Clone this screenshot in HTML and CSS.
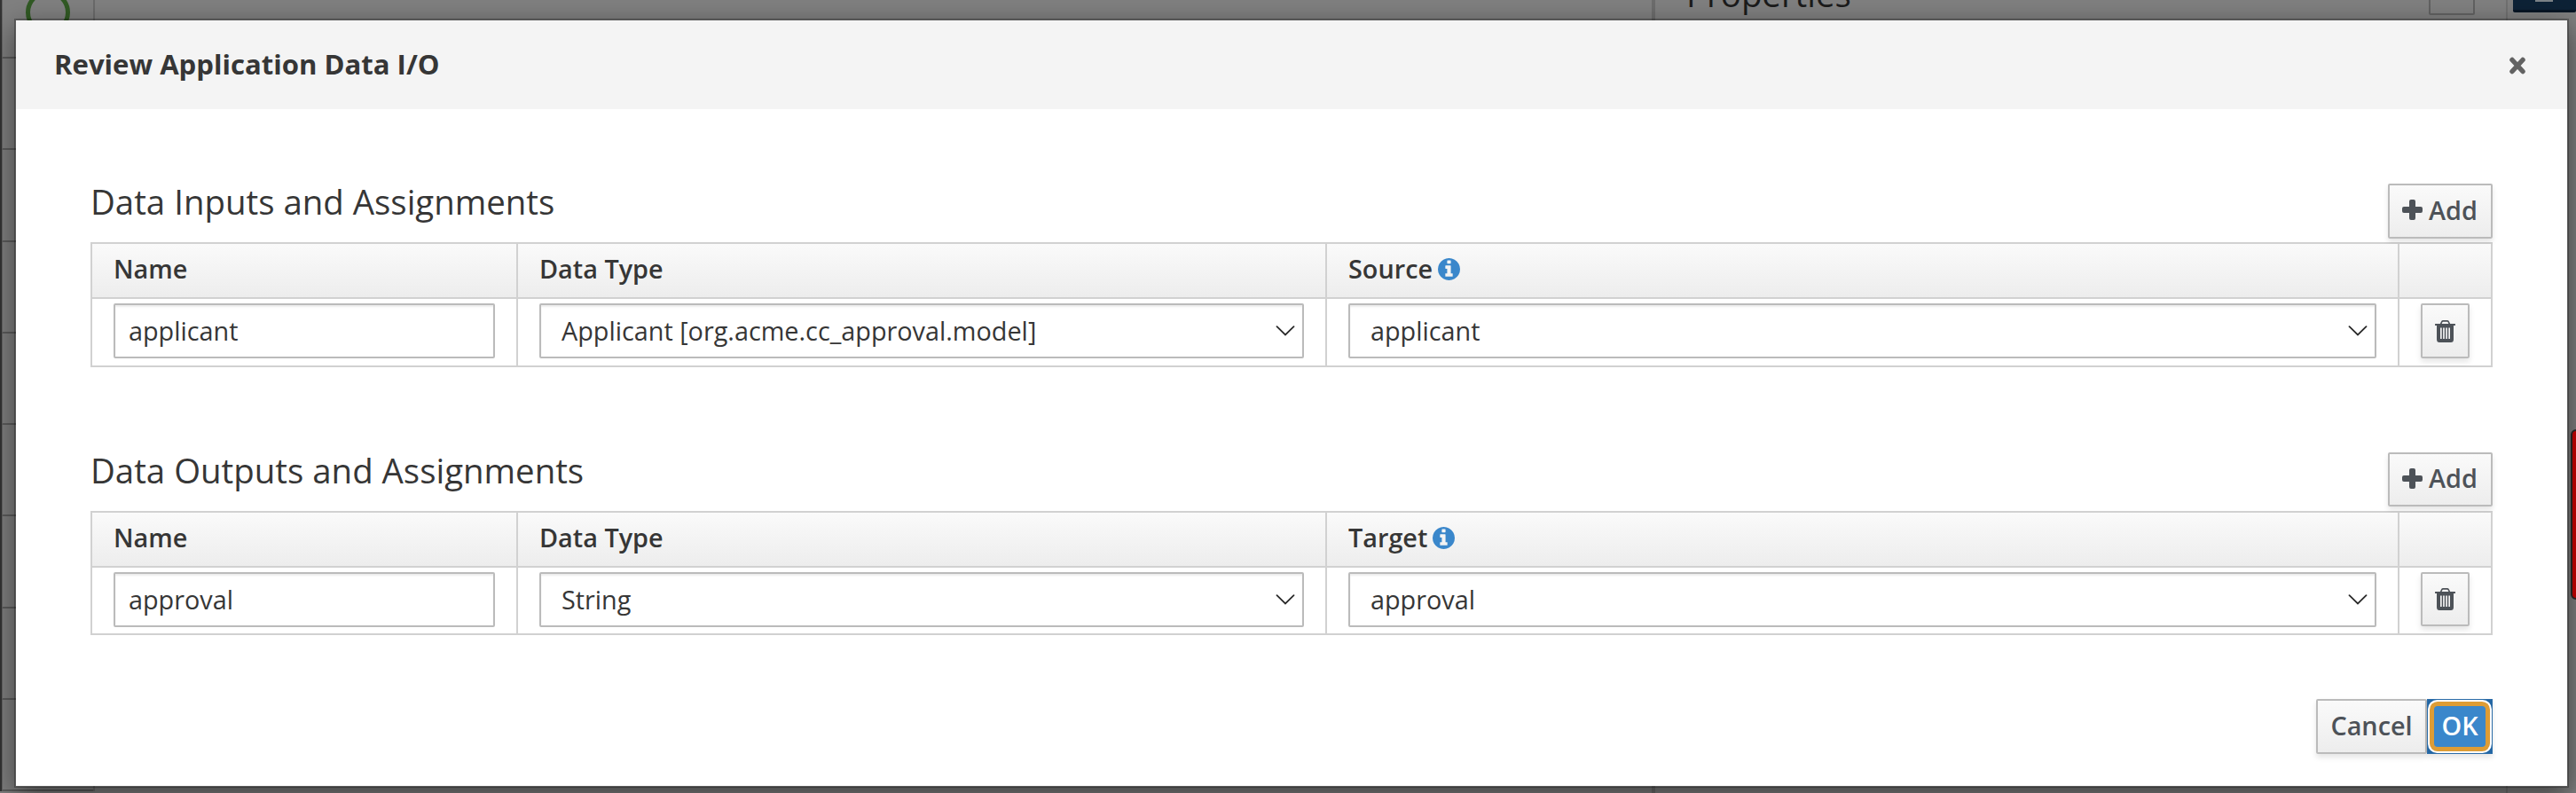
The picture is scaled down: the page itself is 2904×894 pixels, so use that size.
FILE: index.html
```html
<!DOCTYPE html>
<html lang="en">
<head>
<meta charset="utf-8">
<title>Review Application Data I/O</title>
<link rel="stylesheet" href="styles.css">
</head>
<body>
<svg class="defs" width="0" height="0" aria-hidden="true">
  <symbol id="info" viewBox="128 128 1536 1536"><path d="M1152 1376v-160q0-14-9-23t-23-9h-96V672q0-14-9-23t-23-9H672q-14 0-23 9t-9 23v160q0 14 9 23t23 9h96v320h-96q-14 0-23 9t-9 23v160q0 14 9 23t23 9h448q14 0 23-9t9-23zm-128-896V320q0-14-9-23t-23-9H800q-14 0-23 9t-9 23v160q0 14 9 23t23 9h192q14 0 23-9t9-23zm640 416q0 209-103 385.5T1281.5 1561 896 1664t-385.5-103T231 1281.5 128 896t103-385.5T510.5 231 896 128t385.5 103T1561 510.5 1664 896z"/></symbol>
  <symbol id="plus" viewBox="0 0 23 23"><path d="M10 0h3q2 0 2 2v6h6q2 0 2 2v3q0 2-2 2h-6v6q0 2-2 2h-3q-2 0-2-2v-6H2q-2 0-2-2v-3q0-2 2-2h6V2q0-2 2-2z"/></symbol>
  <symbol id="trash" viewBox="0 0 23 25"><path fill-rule="evenodd" d="M0.6 4h5.2L7 1.400Q7.700 0 9.200 0h4.600q1.500 0 2.200 1.400L17.200 4h5.200q.6 0 .6.600v.8q0 .6-.6.600H21v15.500Q21 25 18 25H5q-3 0-3-3.500V6H.6Q0 6 0 5.400v-.8Q0 4 .6 4zM7.600 4h7.800l-.8-1.800q-.2-.5-.7-.5H9.100q-.5 0-.7.500zM6 8.500V21h1.700V8.500zm3.100 0V21h1.700V8.500zm3.100 0V21h1.700V8.500zm3.100 0V21h1.700V8.500z"/></symbol>
  <symbol id="chevron" viewBox="0 0 22 12"><path d="M1.500 1.200 11 10.500l9.500-9.300" fill="none" stroke="#2a2a2a" stroke-width="1.800" stroke-linecap="round"/></symbol>
</svg>

<div class="workbench">
  <div class="palette">
    <span class="cell first"><i class="ring"></i></span><span class="cell"></span><span class="cell"></span><span class="cell"></span><span class="cell"></span><span class="cell"></span><span class="cell"></span><span class="cell"></span><span class="cell"></span>
  </div>
  <div class="canvas"></div>
  <div class="properties"><span class="properties-title">Properties</span><span class="collapse"></span></div>
  <div class="rail"><span class="rail-button"><i class="rail-glyph"></i></span></div>
</div>
<div class="error-bar"></div>

<div class="modal" role="dialog">
  <header class="modal-header">
    <h4 class="modal-title">Review Application Data I/O</h4>
    <svg class="close" viewBox="0 0 20 20"><path d="M4 3.500 16 16.500M16 3.500 4 16.500" stroke="#626262" stroke-width="5.500" stroke-linecap="round"/></svg>
  </header>
  <main class="modal-body">
    <section class="assignments">
      <div class="section-head"><h3><span>Data Inputs and Assignments</span></h3><button class="btn add"><svg class="plus"><use href="#plus"/></svg><span>Add</span></button></div>
      <div class="grid">
        <div class="th"><span>Name</span></div><div class="th"><span>Data Type</span></div><div class="th"><span>Source</span><svg class="info"><use href="#info"/></svg></div><div class="th"></div>
        <div class="td"><div class="field"><span>applicant</span></div></div>
        <div class="td"><div class="field select"><span>Applicant [org.acme.cc_approval.model]</span><svg class="chevron"><use href="#chevron"/></svg></div></div>
        <div class="td"><div class="field select"><span>applicant</span><svg class="chevron"><use href="#chevron"/></svg></div></div>
        <div class="td"><button class="btn delete" aria-label="Delete"><svg class="trash"><use href="#trash"/></svg></button></div>
      </div>
    </section>
    <section class="assignments outputs">
      <div class="section-head"><h3><span>Data Outputs and Assignments</span></h3><button class="btn add"><svg class="plus"><use href="#plus"/></svg><span>Add</span></button></div>
      <div class="grid">
        <div class="th"><span>Name</span></div><div class="th"><span>Data Type</span></div><div class="th"><span>Target</span><svg class="info"><use href="#info"/></svg></div><div class="th"></div>
        <div class="td"><div class="field"><span>approval</span></div></div>
        <div class="td"><div class="field select"><span>String</span><svg class="chevron"><use href="#chevron"/></svg></div></div>
        <div class="td"><div class="field select"><span>approval</span><svg class="chevron"><use href="#chevron"/></svg></div></div>
        <div class="td"><button class="btn delete" aria-label="Delete"><svg class="trash"><use href="#trash"/></svg></button></div>
      </div>
    </section>
    <footer class="actions"><button class="btn cancel"><span>Cancel</span></button><button class="btn ok"><span class="ok-ring">OK</span></button></footer>
  </main>
</div>
</body>
</html>
```
FILE: styles.css
```css
* { box-sizing: border-box; }
body {
  margin: 0;
  width: 2904px;
  height: 894px;
  overflow: hidden;
  position: relative;
  background: #808080;
  color: #363636;
  font: 28.800px/40px "Open Sans", "Noto Sans", sans-serif;
}
.defs { position: absolute; }
h3, h4 { margin: 0; font-weight: 400; }
svg { display: block; flex: none; fill: currentColor; }

/* Dimmed editor behind the dialog */
.workbench { display: flex; height: 894px; overflow: hidden; }
.palette {
  width: 107px;
  height: 892px;
  border-left: 2px solid #343434;
  border-right: 2px solid #6b6b6b;
  overflow: hidden;
}
.cell { display: block; height: 103.250px; border-bottom: 2px solid #5c5c5c; border-left: 1px solid #666; }
.cell.first { display: flex; height: 66px; padding-left: 26px; }
.ring { display: block; width: 50px; height: 50px; margin-top: -11px; border: 5px solid #315a24; border-radius: 50%; }
.canvas { width: 1755px; }
.properties {
  width: 965px;
  height: 894px;
  display: flex;
  justify-content: space-between;
  align-items: flex-start;
  border-left: 4px solid #6d6d6d;
  border-right: 2px solid #717171;
  padding: 0 35px 0 35px;
}
.properties-title { margin-top: -35px; font-size: 38.400px; line-height: 56px; color: #1b1b1b; }
.collapse { width: 52px; height: 33px; margin-top: -16px; border: 2px solid #626262; border-radius: 2px; }
.rail { padding-left: 6px; flex: 1; }
.rail-button { display: block; height: 28px; margin-top: -14px; padding: 14px 0 0 25px; background: #0d2236; border-bottom: 3px solid #061524; border-radius: 2px; }
.rail-glyph { display: block; width: 20px; height: 2px; background: #7c8388; }
.error-bar {
  position: absolute;
  left: 2898px;
  top: 484px;
  width: 40px;
  height: 192px;
  background: #d00000;
  border: 2px solid #292929;
  border-radius: 6px;
}

/* Dialog */
.modal {
  position: absolute;
  left: 16px;
  top: 21px;
  width: 2880px;
  height: 867px;
  border: 2px solid rgba(0, 0, 0, .28);
  background: #fff;
  background-clip: padding-box;
  box-shadow: 0 10px 30px rgba(0, 0, 0, .5);
}
.modal-header {
  height: 100px;
  padding: 0 46px 0 43px;
  display: flex;
  align-items: center;
  justify-content: space-between;
  background: #f4f4f4;
}
.modal-title { font-size: 31.100px; font-weight: 700; line-height: 98px; padding-bottom: 2px; }
.close { width: 20px; height: 20px; margin-top: 1px; }
.modal-body { padding: 84px 84px 0; }
.assignments { height: 303px; }
.section-head { height: 66px; display: flex; justify-content: space-between; align-items: flex-start; }
h3 { font-size: 38.400px; line-height: 40px; }
.grid {
  display: grid;
  grid-template-columns: 480px 912px 1209px 105px;
  grid-template-rows: 62px 77px;
  width: 2708px;
  border-left: 2px solid #d1d1d1;
  border-top: 2px solid #d1d1d1;
}
.outputs .grid { grid-template-rows: 62px 76px; }
.th {
  display: flex;
  align-items: center;
  padding: 0 24px 4px;
  font-weight: 600;
  border-right: 2px solid #d1d1d1;
  border-bottom: 2px solid #d1d1d1;
  background: linear-gradient(#fafafa, #ededed);
}
.info { width: 25px; height: 25px; margin: 0 0 0 6px; color: #3a87cb; }
.td { padding: 5px 24px 0; border-right: 2px solid #d1d1d1; border-bottom: 2px solid #d1d1d1; }
.field {
  height: 62px;
  padding: 0 15px 1px;
  display: flex;
  align-items: center;
  border: 2px solid #bbb;
  border-radius: 2px;
  box-shadow: inset 0 2px 2px rgba(3, 3, 3, .075);
}
.select { justify-content: space-between; padding: 0 8px 1px 23px; }
.chevron { width: 22px; height: 12px; margin-top: 1px; }
.btn {
  display: flex;
  align-items: center;
  height: 62px;
  margin: 0;
  border: 2px solid #bbb;
  border-radius: 2px;
  background: linear-gradient(#fafafa, #ededed);
  color: #4d5258;
  font: 600 28.800px/36px "Open Sans", "Noto Sans", sans-serif;
  box-shadow: 0 4px 6px rgba(3, 3, 3, .1);
}
.add { width: 118px; padding: 0 0 3px 14px; gap: 7px; }
.plus { width: 23px; height: 23px; }
.delete { width: 55px; padding: 0; justify-content: center; }
.outputs .btn { height: 61px; }
.trash { width: 23px; height: 25px; }
.actions { display: flex; justify-content: flex-end; margin-top: -25px; }
.cancel { width: 125px; padding: 0 0 3px; justify-content: center; }
.ok { width: 74px; padding: 0; border: 1px solid #2b6ca8; border-radius: 0; background: #2366a3; color: #fff; }
.ok-ring {
  display: flex;
  align-items: center;
  justify-content: center;
  width: 58px;
  height: 46px;
  margin: 0 auto;
  padding-bottom: 3px;
  border-radius: 4px;
  background: #3a87cb;
  box-shadow: 0 0 0 5px #dd9c35, 0 0 0 7px #fff;
}
```
